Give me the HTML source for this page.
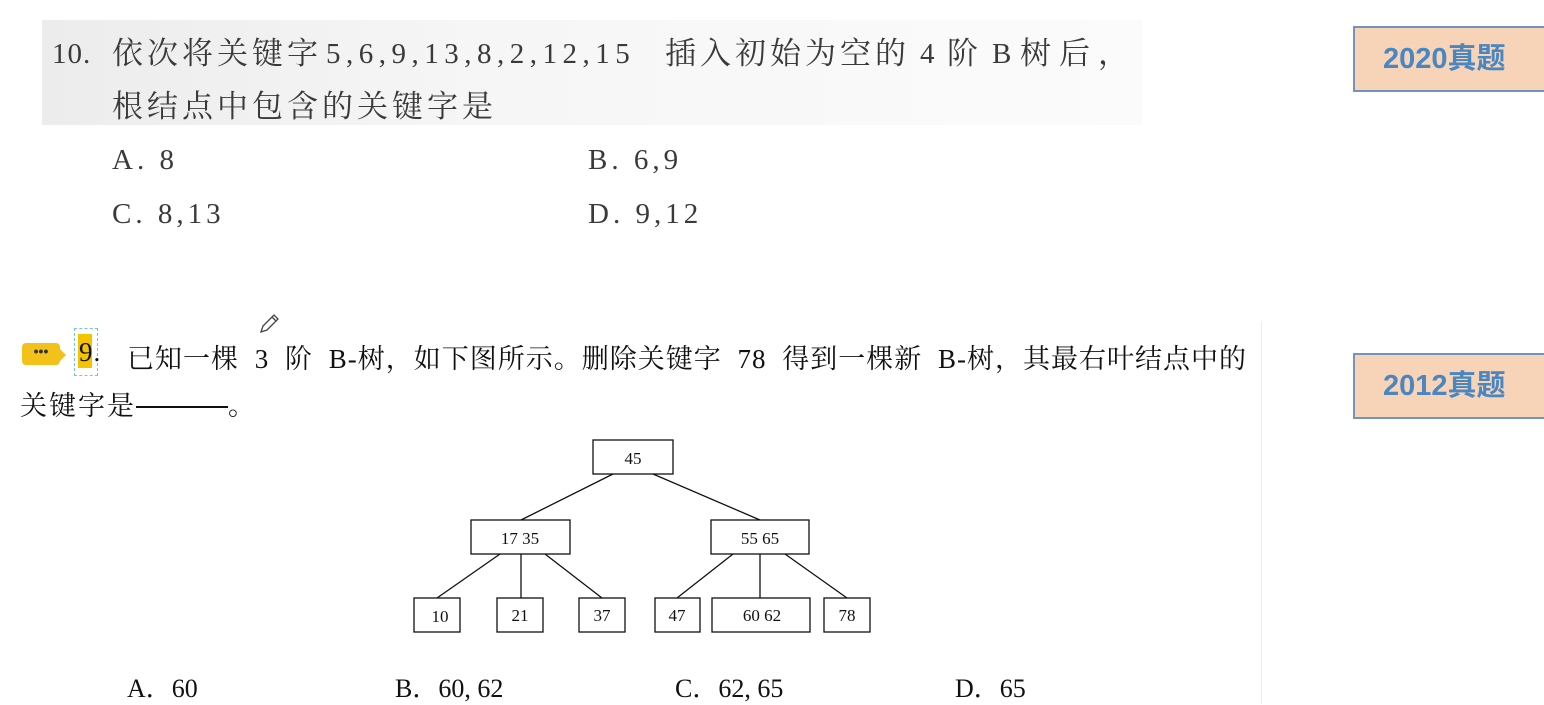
<!DOCTYPE html>
<html><head><meta charset="utf-8"><style>
body{margin:0;width:1544px;height:704px;background:#fff;position:relative;overflow:hidden;font-family:"Liberation Serif","Noto Serif CJK SC",serif;}
.a{position:absolute;white-space:nowrap;}
.scan{color:#3a3a3a;font-size:31px;letter-spacing:4px;line-height:40px;}
.n{font-size:29px;}
.q{color:#111;font-size:27px;letter-spacing:1px;word-spacing:8px;}
.o{color:#111;font-size:26px;}
.tag{position:absolute;left:1353px;width:200px;height:66px;background:#f7d3b8;border:2px solid #7394b8;box-sizing:border-box;font-family:"Liberation Sans","Noto Sans CJK SC",sans-serif;font-weight:bold;color:#4a86c0;font-size:29px;line-height:62px;padding-left:28px;}
</style></head><body>
<div class="a" style="left:42px;top:20px;width:1100px;height:105px;background:linear-gradient(90deg,#ececec,#f6f6f6 40%,#fbfbfb)"></div>
<div class="a scan n" style="left:52px;top:34px;letter-spacing:1px">10.</div>
<div class="a scan" style="left:112px;top:34px">依次将关键字</div>
<div class="a scan n" style="left:326px;top:34px;letter-spacing:5.5px">5,6,9,13,8,2,12,15</div>
<div class="a scan" style="left:665px;top:34px">插入初始为空的</div>
<div class="a scan n" style="left:920px;top:34px">4</div>
<div class="a scan" style="left:947px;top:34px">阶</div>
<div class="a scan n" style="left:992px;top:34px">B</div>
<div class="a scan" style="left:1020px;top:34px;letter-spacing:8px">树后，</div>
<div class="a scan" style="left:112px;top:87px">根结点中包含的关键字是</div>
<div class="a scan n" style="left:112px;top:140px">A. 8</div>
<div class="a scan n" style="left:588px;top:140px">B. 6,9</div>
<div class="a scan n" style="left:112px;top:194px">C. 8,13</div>
<div class="a scan n" style="left:588px;top:194px">D. 9,12</div>
<div class="tag" style="top:26px">2020真题</div>
<div class="tag" style="top:353px">2012真题</div>
<div class="a" style="left:1261px;top:322px;width:1px;height:382px;background:#eee"></div>
<div class="a" style="left:22px;top:343px;width:38px;height:22px;background:#f2c21b;border-radius:4px;color:#333;font:bold 14px 'Liberation Sans',sans-serif;text-align:center;line-height:16px">•••</div>
<div class="a" style="left:60px;top:349px;width:0;height:0;border-top:6px solid transparent;border-bottom:6px solid transparent;border-left:6px solid #f2c21b"></div>
<div class="a" style="left:74px;top:328px;width:22px;height:46px;border:1px dashed #7cc0e0"></div>
<div class="a" style="left:78px;top:334px;width:14px;height:34px;background:#f5c400"></div>
<svg class="a" style="left:258px;top:312px" width="24" height="24"><path d="M3 20 L5 14 L16 3 L20 7 L9 18 Z M14 5 L18 9" fill="none" stroke="#444" stroke-width="1.3"/></svg>
<div class="a q" style="left:79px;top:337px">9.</div>
<div class="a q" style="left:127px;top:337px">已知一棵 3 阶 B-树，如下图所示。删除关键字 78 得到一棵新 B-树，其最右叶结点中的</div>
<div class="a q" style="left:20px;top:384px;letter-spacing:2px">关键字是<span style="display:inline-block;width:92px;border-bottom:2px solid #111;height:22px;vertical-align:top"></span>。</div>
<svg class="a" style="left:0;top:0" width="1000" height="704" font-family="Liberation Serif" font-size="17" fill="#111">
<g fill="none" stroke="#111" stroke-width="1.3">
<rect x="593" y="440" width="80" height="34"/>
<rect x="471" y="520" width="99" height="34"/>
<rect x="711" y="520" width="98" height="34"/>
<rect x="414" y="598" width="46" height="34"/>
<rect x="497" y="598" width="46" height="34"/>
<rect x="579" y="598" width="46" height="34"/>
<rect x="655" y="598" width="45" height="34"/>
<rect x="712" y="598" width="98" height="34"/>
<rect x="824" y="598" width="46" height="34"/>
<path d="M613 474 L521 520 M653 474 L760 520 M500 554 L437 598 M521 554 L521 598 M545 554 L602 598 M733 554 L677 598 M760 554 L760 598 M785 554 L847 598"/>
</g>
<text x="633" y="464" text-anchor="middle">45</text>
<text x="520" y="544" text-anchor="middle">17 35</text>
<text x="760" y="544" text-anchor="middle">55 65</text>
<text x="440" y="622" text-anchor="middle">10</text>
<text x="520" y="621" text-anchor="middle">21</text>
<text x="602" y="621" text-anchor="middle">37</text>
<text x="677" y="621" text-anchor="middle">47</text>
<text x="762" y="621" text-anchor="middle">60 62</text>
<text x="847" y="621" text-anchor="middle">78</text>
</svg>
<div class="a o" style="left:127px;top:668px">A．60</div>
<div class="a o" style="left:395px;top:668px">B．60, 62</div>
<div class="a o" style="left:675px;top:668px">C．62, 65</div>
<div class="a o" style="left:955px;top:668px">D．65</div>
</body></html>
